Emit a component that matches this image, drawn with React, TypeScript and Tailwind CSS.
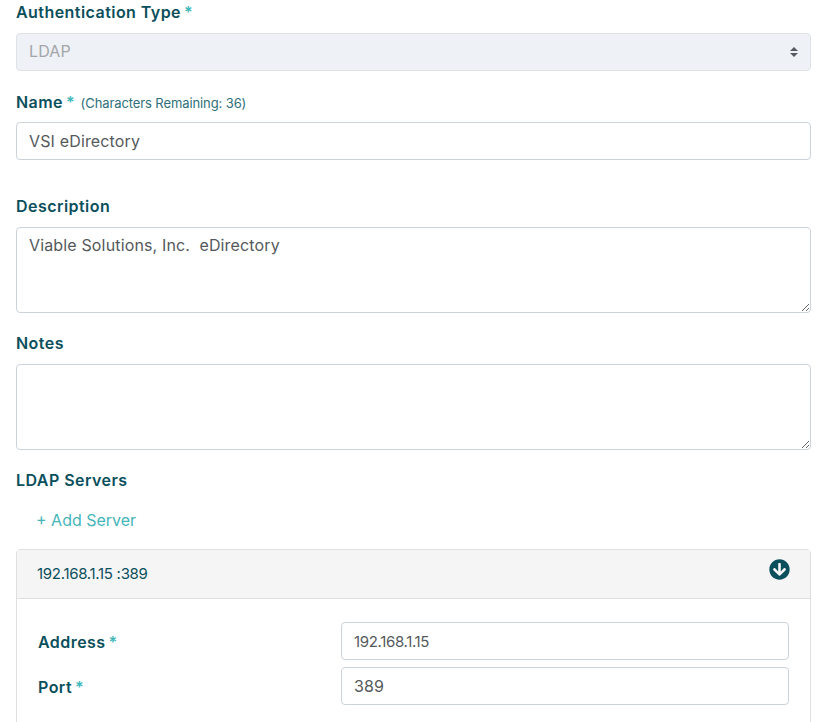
import type { ReactNode } from "react";
import { FaArrowCircleDown } from "react-icons/fa";

const FONT = "font-['Inter','Liberation_Sans',sans-serif]";

function Req() {
  return <span className="ml-[3px] text-[#3fb8b8]">*</span>;
}

function FieldLabel({ children, className = "" }: { children: ReactNode; className?: string }) {
  return (
    <label
      className={`block h-6 text-base leading-6 font-semibold tracking-[0.45px] text-[#0b4f5c] ${className}`}
    >
      {children}
    </label>
  );
}

const boxCls = "block w-full rounded border border-[#ccd3db] bg-white px-3 text-[#55595c] outline-none";
const inputCls = `${boxCls} h-[38px] text-base tracking-[0.15px]`;
const areaCls = `${boxCls} h-[86px] py-[5px] text-base leading-6 tracking-[0.15px]`;

export default function App() {
  return (
    <div className={`h-[722px] w-[832px] overflow-hidden bg-white pl-4 pr-[21px] ${FONT}`}>
      <FieldLabel>
        Authentication Type
        <Req />
      </FieldLabel>
      <div className="relative mt-[9px]">
        <select
          disabled
          defaultValue="LDAP"
          className="block h-[38px] w-full appearance-none rounded border border-[#dfe3e8] bg-[#eef1f6] px-3 pb-0.5 text-base tracking-[0.15px] text-[#a3a6a9] outline-none"
        >
          <option>LDAP</option>
        </select>
        <svg
          className="pointer-events-none absolute right-3 top-[13px]"
          width="10"
          height="12"
          viewBox="0 0 10 12"
          fill="#555b60"
        >
          <path d="M5 1 9 5H1zM5 11 1 7h8z" />
        </svg>
      </div>

      <FieldLabel className="mt-[19px]">
        Name
        <Req />{" "}
        <span className="ml-px text-[13px] font-normal tracking-[-0.1px] text-[#2f6f7a]">
          (Characters Remaining: 36)
        </span>
      </FieldLabel>
      <input className={`${inputCls} mt-2`} defaultValue="VSI eDirectory" />

      <FieldLabel className="mt-[34px]">Description</FieldLabel>
      <textarea className={`${areaCls} mt-[9px]`} defaultValue="Viable Solutions, Inc.  eDirectory" />

      <FieldLabel className="mt-[18px]">Notes</FieldLabel>
      <textarea className={`${areaCls} mt-[9px]`} defaultValue="" />

      <FieldLabel className="mt-[18px]">LDAP Servers</FieldLabel>
      <div className="mt-4 h-6 pl-5 text-base leading-6 text-[#45b5b9]">+ Add Server</div>

      <div className="mt-[17px] rounded border border-[#dfdfdf]">
        <div className="flex h-[49px] items-start justify-between border-b border-[#dfdfdf] bg-[#f5f5f5] px-5">
          <span className="mt-3 text-[15px] leading-6 tracking-[-0.3px] text-[#0b4f5c]">
            192.168.1.15 :389
          </span>
          <FaArrowCircleDown className="mt-[9px] text-[#0b4f5c]" size={21} />
        </div>
        <div className="px-[21px] pb-8 pt-[23px]">
          <div className="grid grid-cols-[303px_1fr] items-center gap-y-[7px]">
            <FieldLabel className="mt-0.5">
              Address
              <Req />
            </FieldLabel>
            <input
              className={`${boxCls} h-[38px] text-[15px] tracking-[-0.35px]`}
              defaultValue="192.168.1.15"
            />
            <FieldLabel className="mt-0.5">
              Port
              <Req />
            </FieldLabel>
            <input className={inputCls} defaultValue="389" />
          </div>
        </div>
      </div>
    </div>
  );
}
